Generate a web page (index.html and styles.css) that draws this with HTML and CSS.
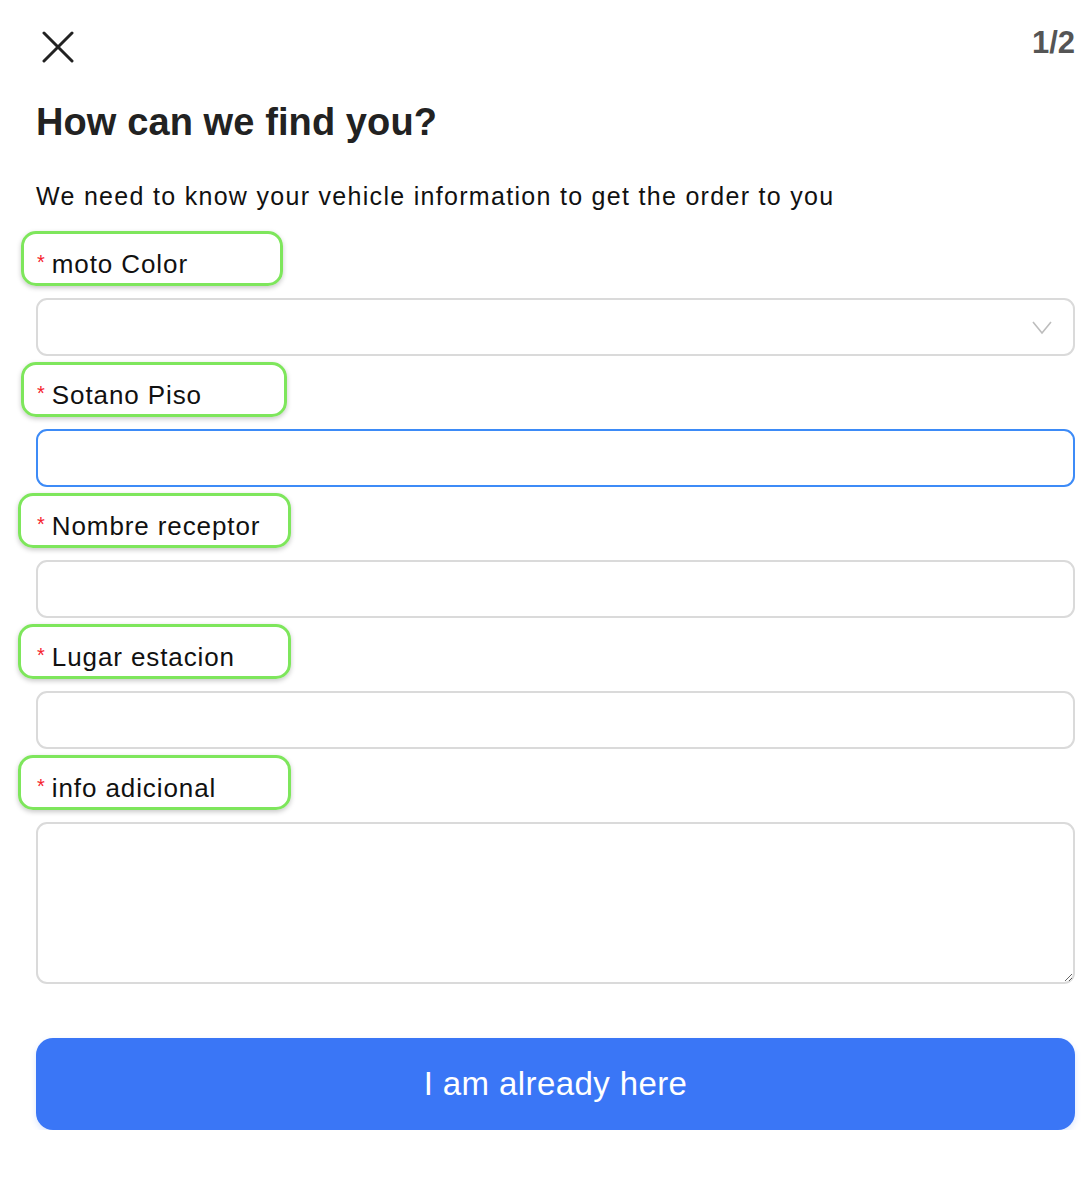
FILE: index.html
```html
<!DOCTYPE html>
<html lang="en">
<head>
<meta charset="utf-8">
<title>How can we find you?</title>
<link rel="stylesheet" href="styles.css">
</head>
<body>
<div class="page">
  <div class="topbar">
    <button class="close" aria-label="Close">
      <svg width="32" height="32" viewBox="0 0 32 32" fill="none" stroke="#222" stroke-width="3" stroke-linecap="round">
        <line x1="2" y1="2" x2="30" y2="30"/>
        <line x1="30" y1="2" x2="2" y2="30"/>
      </svg>
    </button>
    <span class="step">1/2</span>
  </div>

  <h1 class="title">How can we find you?</h1>
  <p class="subtitle">We need to know your vehicle information to get the order to you</p>

  <form class="form">
    <div class="field">
      <label class="label label-a"><span class="req">*</span>moto Color</label>
      <div class="select">
        <svg class="chev" width="20" height="14" viewBox="0 0 20 14" fill="none" stroke="#bdbdbd" stroke-width="1.6">
          <polyline points="1,1 10,12 19,1"/>
        </svg>
      </div>
    </div>
    <div class="field">
      <label class="label label-b"><span class="req">*</span>Sotano Piso</label>
      <input class="input focused" type="text">
    </div>
    <div class="field">
      <label class="label label-c"><span class="req">*</span>Nombre receptor</label>
      <input class="input" type="text">
    </div>
    <div class="field">
      <label class="label label-c"><span class="req">*</span>Lugar estacion</label>
      <input class="input" type="text">
    </div>
    <div class="field">
      <label class="label label-c"><span class="req">*</span>info adicional</label>
      <textarea class="textarea"></textarea>
    </div>
    <button type="button" class="submit">I am already here</button>
  </form>
</div>
</body>
</html>
```
FILE: styles.css
```css
* { box-sizing: border-box; }
html, body { margin: 0; padding: 0; background: #fff; }
body {
  font-family: "Liberation Sans", Arial, Helvetica, sans-serif;
  color: #1a1a1a;
}
.page {
  padding: 0 15px 0 36px;
}
.topbar {
  display: flex;
  justify-content: space-between;
  align-items: flex-start;
  padding-top: 26px;
  height: 60px;
}
.close {
  border: 0;
  background: none;
  padding: 0;
  margin: 5px 0 0 6px;
  width: 32px;
  height: 32px;
  cursor: pointer;
}
.close svg { display: block; }
.step {
  font-size: 31px;
  line-height: 34px;
  font-weight: 700;
  color: #555;
}
.title {
  margin: 40px 0 0;
  font-size: 38px;
  line-height: 44px;
  font-weight: 700;
  color: #222;
  letter-spacing: 0.1px;
}
.subtitle {
  margin: 37px 0 0;
  font-size: 25px;
  line-height: 30px;
  color: #111;
  letter-spacing: 1.3px;
}
.form {
  margin-top: 20px;
  display: flex;
  flex-direction: column;
}
.field {
  display: flex;
  flex-direction: column;
  align-items: flex-start;
  margin-bottom: 6px;
}
.label {
  display: block;
  height: 55px;
  padding: 13px 0 0 13px;
  border: 3px solid #7ee65c;
  border-radius: 15px;
  box-shadow: 0 2px 5px rgba(0, 0, 0, 0.22);
  font-size: 26px;
  line-height: 30px;
  color: #111;
  margin-bottom: 12px;
  white-space: nowrap;
  letter-spacing: 0.9px;
}
.label-a { margin-left: -15px; width: 262px; }
.label-b { margin-left: -15px; width: 266px; }
.label-c { margin-left: -18px; width: 273px; padding-left: 16px; }
.req {
  color: #f5222d;
  font-size: 20px;
  vertical-align: 4px;
  margin-right: 7px;
  letter-spacing: 0;
}
.select, .input, .textarea {
  display: block;
  width: 100%;
  height: 58px;
  border: 2px solid #dadada;
  border-radius: 11px;
  background: #fff;
  font-family: inherit;
  font-size: 24px;
  outline: none;
  padding: 0 16px;
  margin: 0;
}
.select {
  display: flex;
  align-items: center;
  justify-content: flex-end;
  padding-right: 21px;
}
.chev { display: block; margin-top: 1px; }
.input.focused {
  border-color: #3d8bf7;
}
.textarea {
  height: 162px;
  resize: vertical;
  padding: 12px 16px;
}
.submit {
  margin-top: 48px;
  height: 92px;
  width: 100%;
  border: 0;
  border-radius: 17px;
  background: #3a76f6;
  box-shadow: 0 3px 6px rgba(58, 118, 246, 0.18);
  color: #fff;
  font-family: inherit;
  font-size: 33px;
  letter-spacing: 0.4px;
  cursor: pointer;
}
```
